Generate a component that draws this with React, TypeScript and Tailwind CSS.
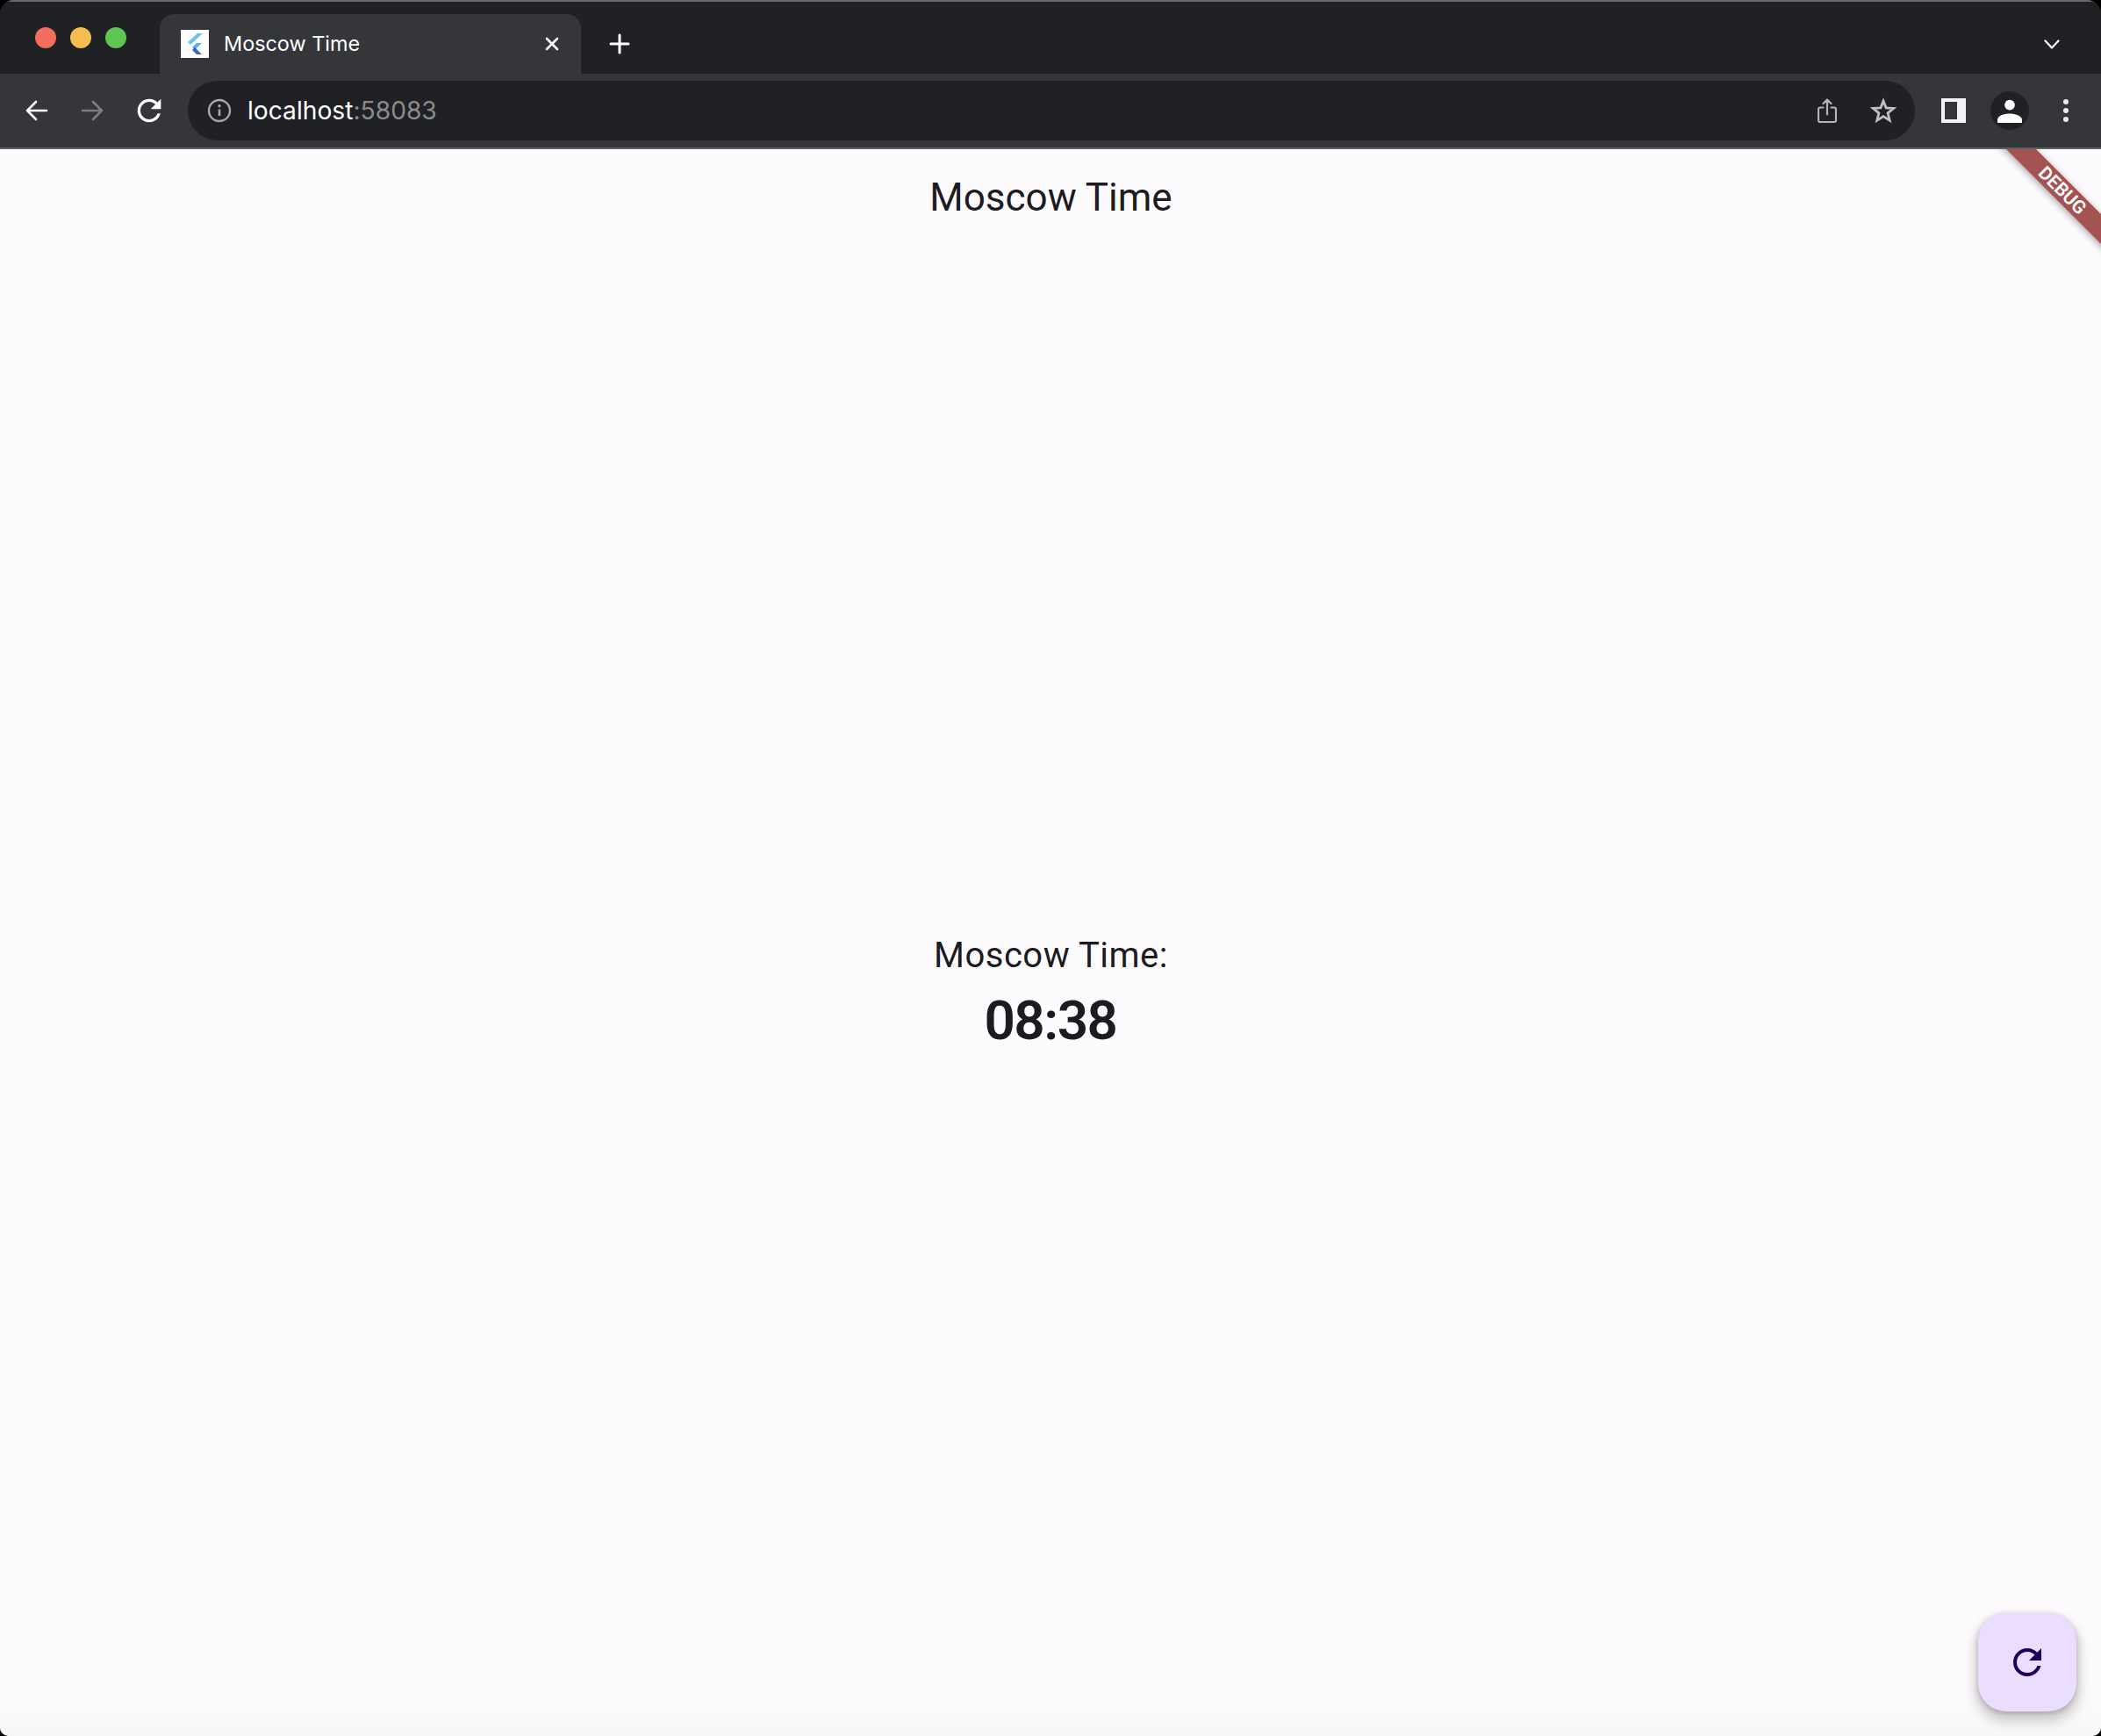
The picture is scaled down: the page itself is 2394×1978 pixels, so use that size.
export default function App() {
  const refresh =
    "M17.65 6.35C16.2 4.9 14.21 4 12 4c-4.42 0-7.99 3.58-7.99 8s3.57 8 7.99 8c3.73 0 6.84-2.55 7.73-6h-2.08c-.82 2.33-3.04 4-5.65 4-3.31 0-6-2.69-6-6s2.69-6 6-6c1.66 0 3.14.69 4.22 1.78L13 11h7V4l-2.35 2.35z";
  return (
    <div className="h-[1978px] w-[2394px] overflow-hidden bg-black font-['Roboto',sans-serif]">
      <div className="flex h-full flex-col overflow-hidden rounded-t-[16px] rounded-b-[10px]">
        <header className="flex h-[170px] flex-col border-t-2 border-b-2 border-t-[#6a6a6c] border-b-[#5f6064] bg-[#35363a] font-['Inter',sans-serif]">
          <div className="flex h-[82px] items-end bg-[#202124]">
            <div className="flex h-[66px] w-[182px] items-start gap-[16px] pt-[13px] pl-[40px]">
              <span className="size-[24px] rounded-full bg-[#f26d5f]" />
              <span className="size-[24px] rounded-full bg-[#f5bd4f]" />
              <span className="size-[24px] rounded-full bg-[#61c554]" />
            </div>
            <div className="flex h-[68px] w-[480px] items-center rounded-t-[16px] bg-[#35363a] pr-[25px] pl-[24px]">
              <svg viewBox="0 0 32 32" className="size-[32px] shrink-0 bg-white">
                <path d="M19 4h6L11 17l-3-3z" fill="#6cc4f5" />
                <path d="M18 15h6l-8 8-3-3z" fill="#58aef0" />
                <path d="M13 23l3-3 8 8h-6z" fill="#0d47a1" opacity="0.8" />
              </svg>
              <span className="ml-[17px] flex-1 text-[23.400px] leading-none whitespace-nowrap text-white">Moscow Time</span>
              <svg viewBox="0 0 16 16" className="size-[16px] shrink-0" fill="none" stroke="#fff" strokeWidth="2.6" strokeLinecap="round">
                <path d="M2 2l12 12M14 2L2 14" />
              </svg>
            </div>
            <div className="flex h-[68px] w-[88px] items-center justify-center">
              <svg viewBox="0 0 24 24" className="size-[24px]" fill="none" stroke="#fff" strokeWidth="3" strokeLinecap="round">
                <path d="M12 2v20M2 12h20" />
              </svg>
            </div>
            <div className="flex-1" />
            <div className="mr-[47px] flex h-[68px] items-center">
              <svg viewBox="0 0 18 11" className="h-[11px] w-[18px]" fill="none" stroke="#fff" strokeWidth="2.2" strokeLinecap="round" strokeLinejoin="round">
                <path d="M1.5 1.5L9 9.5l7.5-8" />
              </svg>
            </div>
          </div>
          <div className="flex h-[84px] items-center">
            <div className="flex w-[84px] justify-center">
              <svg viewBox="0 0 26 26" className="size-[26px]" fill="none" stroke="#fff" strokeWidth="2.6" strokeLinecap="round" strokeLinejoin="round">
                <path d="M24 13H3M12 3L2 13l10 10" />
              </svg>
            </div>
            <div className="flex w-[42px] justify-center">
              <svg viewBox="0 0 26 26" className="size-[26px]" fill="none" stroke="#7c7d80" strokeWidth="2.6" strokeLinecap="round" strokeLinejoin="round">
                <path d="M2 13h21M14 3l10 10-10 10" />
              </svg>
            </div>
            <div className="flex w-[88px] justify-center">
              <svg viewBox="0 0 24 24" className="size-[40px]" fill="#fff">
                <path d={refresh} />
              </svg>
            </div>
            <div className="flex h-[68px] flex-1 items-center rounded-full bg-[#202124] pr-[20px] pl-[22px]">
              <svg viewBox="0 0 28 28" className="size-[28px] shrink-0" fill="none">
                <circle cx="14" cy="14" r="12" stroke="#a6a8ab" strokeWidth="2.4" />
                <path d="M14 12.500V20" stroke="#a6a8ab" strokeWidth="2.6" />
                <circle cx="14" cy="8.800" r="1.700" fill="#a6a8ab" />
              </svg>
              <span className="ml-[18px] flex-1 text-[28.200px] leading-none whitespace-nowrap text-white">
                localhost<span className="text-[#8a8b8e]">:58083</span>
              </span>
              <svg viewBox="0 0 22 28" className="h-[28px] w-[22px] shrink-0" fill="none" stroke="#b4b5b7" strokeWidth="2.2" strokeLinejoin="round" strokeLinecap="round">
                <path d="M6.500 10.500H3a2 2 0 0 0-2 2V25a2 2 0 0 0 2 2h16a2 2 0 0 0 2-2V12.500a2 2 0 0 0-2-2h-3.500M11 18.500V1.500M6.500 6L11 1.500 15.500 6" />
              </svg>
              <svg viewBox="0 0 30 30" className="ml-[38px] size-[30px] shrink-0" fill="none" stroke="#c0c1c3" strokeWidth="2.8" strokeLinejoin="miter">
                <path d="M15 4l3.100 7.800 8.500.6-6.500 5.400 2.100 8.300L15 21.600l-7.200 4.500 2.100-8.300-6.500-5.400 8.500-.6z" />
              </svg>
              <span className="w-px" />
            </div>
            <div className="ml-[30px] flex h-[28px] w-[28px] shrink-0 border-4 border-[#f1f3f4] bg-[#f1f3f4]">
              <span className="h-full w-[14px] bg-[#35363a]" />
            </div>
            <div className="ml-[28px] flex size-[44px] shrink-0 items-center justify-center rounded-full bg-[#202124]">
              <svg viewBox="0 0 24 24" className="size-[28px]" fill="#fff">
                <circle cx="12" cy="6.500" r="5" />
                <path d="M0 24v-3c0-4 7-6 12-6s12 2 12 6v3z" />
              </svg>
            </div>
            <div className="ml-[28px] flex h-[28px] w-[28px] shrink-0 flex-col items-center justify-between py-[1px]">
              <span className="size-[6px] rounded-full bg-[#e8eaed]" />
              <span className="size-[6px] rounded-full bg-[#e8eaed]" />
              <span className="size-[6px] rounded-full bg-[#e8eaed]" />
            </div>
            <div className="w-[26px]" />
          </div>
        </header>

        <main className="relative flex flex-1 flex-col overflow-hidden bg-[#fefbff] text-[#1c1b1f]">
          <div className="flex h-[112px] items-center justify-center pb-[3px] pl-[1px]">
            <h1 className="text-[44px] leading-none font-normal">Moscow Time</h1>
          </div>
          <div className="flex flex-1 flex-col items-center justify-center pt-[7px]">
            <p className="pl-[1px] text-[40px] leading-[48px] tracking-[0.5px]">Moscow Time:</p>
            <p className="mt-[10px] text-[62px] leading-[80px] font-semibold tracking-[-1.5px]">08:38</p>
          </div>

          <div className="pointer-events-none absolute right-0 bottom-0 left-0 h-[45px] bg-gradient-to-b from-transparent to-[#f8f6f9]" />

          <div className="absolute right-[28px] bottom-[28px] flex size-[112px] items-center justify-center rounded-[32px] bg-[#eaddff] shadow-[0_8px_14px_4px_rgba(0,0,0,0.18),0_2px_6px_rgba(0,0,0,0.2)]">
            <svg viewBox="0 0 24 24" className="size-[48px]" fill="#21005d">
              <path d={refresh} />
            </svg>
          </div>

          <div className="absolute top-[35px] right-[-96px] flex h-[24px] w-[280px] rotate-45 items-center justify-center bg-[#a55252] text-[21px] leading-none font-semibold text-white shadow-[0_2px_8px_rgba(0,0,0,0.35)]">
            DEBUG
          </div>
        </main>
      </div>
    </div>
  );
}
